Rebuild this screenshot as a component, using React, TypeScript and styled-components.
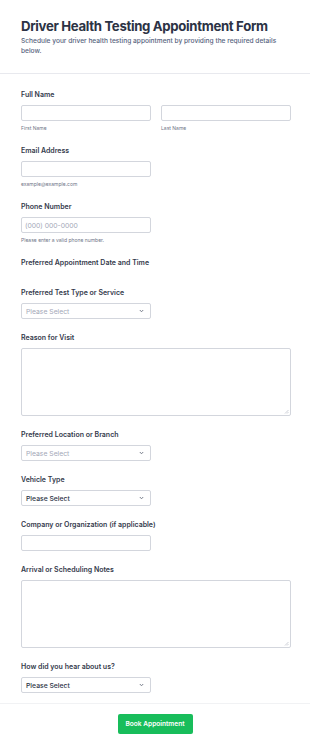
import React from "react";
import styled, { createGlobalStyle } from "styled-components";

const Global = createGlobalStyle`
  html, body { margin: 0; padding: 0; background: #ffffff; }
  body { font-family: Inter, "Noto Sans", "Liberation Sans", sans-serif; color: #2c3345; }
  * { box-sizing: border-box; }
`;

const Page = styled.div`
  width: 310px;
  background: #ffffff;
`;

const Header = styled.header`
  padding: 16px 19px 17px 21px;
  border-bottom: 1px solid #e8e9ee;
`;

const Title = styled.h1`
  margin: 0;
  font-size: 13.2px;
  line-height: 20px;
  font-weight: 700;
  color: #2c3345;
  letter-spacing: -0.025em;
  white-space: nowrap;
`;

const Subtitle = styled.p`
  margin: 0;
  font-size: 6.6px;
  line-height: 10px;
  color: #57647e;
  font-weight: 500;
`;

const Form = styled.form`
  padding: 10px 19px 2px 21px;
  border-bottom: 1px solid #f1f2f4;
`;

const Field = styled.div<{ $gapAfter?: number }>`
  padding: 6px 0 ${(p) => 8 + (p.$gapAfter ?? 0)}px;
`;

const Label = styled.div<{ $bare?: boolean }>`
  font-size: 7px;
  line-height: 10px;
  font-weight: 600;
  color: #343a4c;
  margin-bottom: ${(p) => (p.$bare ? 0 : 5)}px;
`;

const Row = styled.div`
  display: grid;
  grid-template-columns: 1fr 1fr;
  column-gap: 10px;
`;

const Col = styled.div`
  display: flex;
  flex-direction: column;
`;

const Input = styled.div<{ $full?: boolean }>`
  width: ${(p) => (p.$full ? "100%" : "130px")};
  height: 16px;
  border: 1px solid #d3d6dd;
  border-radius: 2px;
  background: #fff;
  display: flex;
  align-items: center;
  padding: 0 3px;
  font-size: 6.8px;
  color: #a4a8b8;
`;

const TextArea = styled.div`
  width: 100%;
  height: 68px;
  border: 1px solid #d3d6dd;
  border-radius: 2px;
  background: #fff;
  position: relative;
`;

const Grip = styled.svg`
  position: absolute;
  right: 1px;
  bottom: 1px;
`;

const Select = styled.div<{ $muted?: boolean }>`
  width: 130px;
  height: 16px;
  border: 1px solid #d3d6dd;
  border-radius: 2px;
  background: #fff;
  display: flex;
  align-items: center;
  justify-content: space-between;
  padding: 0 6px 0 4px;
  font-size: 6.8px;
  color: ${(p) => (p.$muted ? "#a4a8b8" : "#2c3345")};
  font-weight: ${(p) => (p.$muted ? 400 : 500)};
`;

const Sub = styled.div`
  margin-top: 4px;
  font-size: 5px;
  line-height: 7px;
  color: #6f7688;
`;

const Footer = styled.div`
  display: flex;
  justify-content: center;
  padding: 10px 0 17px;
`;

const Button = styled.button`
  width: 75px;
  height: 20px;
  border: none;
  border-radius: 2px;
  background: #18bd5b;
  color: #ffffff;
  font-family: inherit;
  font-size: 6.6px;
  font-weight: 600;
  padding: 0;
`;

const Chevron = () => (
  <svg width="5" height="4" viewBox="0 0 5 4">
    <path d="M0.8 1 L2.5 2.8 L4.2 1" fill="none" stroke="#6b7280" strokeWidth="0.9" />
  </svg>
);

const Resize = () => (
  <Grip width="5" height="5" viewBox="0 0 5 5">
    <path d="M1 4.5 L4.5 1 M3 4.5 L4.5 3" stroke="#b8bcc6" strokeWidth="0.7" />
  </Grip>
);

export default function App() {
  return (
    <Page>
      <Global />
      <Header>
        <Title>Driver Health Testing Appointment Form</Title>
        <Subtitle>
          Schedule your driver health testing appointment by providing the required details below.
        </Subtitle>
      </Header>
      <Form>
        <Field>
          <Label>Full Name</Label>
          <Row>
            <Col>
              <Input $full />
              <Sub>First Name</Sub>
            </Col>
            <Col>
              <Input $full />
              <Sub>Last Name</Sub>
            </Col>
          </Row>
        </Field>
        <Field>
          <Label>Email Address</Label>
          <Input />
          <Sub>example@example.com</Sub>
        </Field>
        <Field>
          <Label>Phone Number</Label>
          <Input>(000) 000-0000</Input>
          <Sub>Please enter a valid phone number.</Sub>
        </Field>
        <Field $gapAfter={6}>
          <Label $bare>Preferred Appointment Date and Time</Label>
        </Field>
        <Field>
          <Label>Preferred Test Type or Service</Label>
          <Select $muted>
            Please Select
            <Chevron />
          </Select>
        </Field>
        <Field>
          <Label>Reason for Visit</Label>
          <TextArea>
            <Resize />
          </TextArea>
        </Field>
        <Field>
          <Label>Preferred Location or Branch</Label>
          <Select $muted>
            Please Select
            <Chevron />
          </Select>
        </Field>
        <Field>
          <Label>Vehicle Type</Label>
          <Select>
            Please Select
            <Chevron />
          </Select>
        </Field>
        <Field>
          <Label>Company or Organization (if applicable)</Label>
          <Input />
        </Field>
        <Field>
          <Label>Arrival or Scheduling Notes</Label>
          <TextArea>
            <Resize />
          </TextArea>
        </Field>
        <Field>
          <Label>How did you hear about us?</Label>
          <Select>
            Please Select
            <Chevron />
          </Select>
        </Field>
      </Form>
      <Footer>
        <Button type="button">Book Appointment</Button>
      </Footer>
    </Page>
  );
}
